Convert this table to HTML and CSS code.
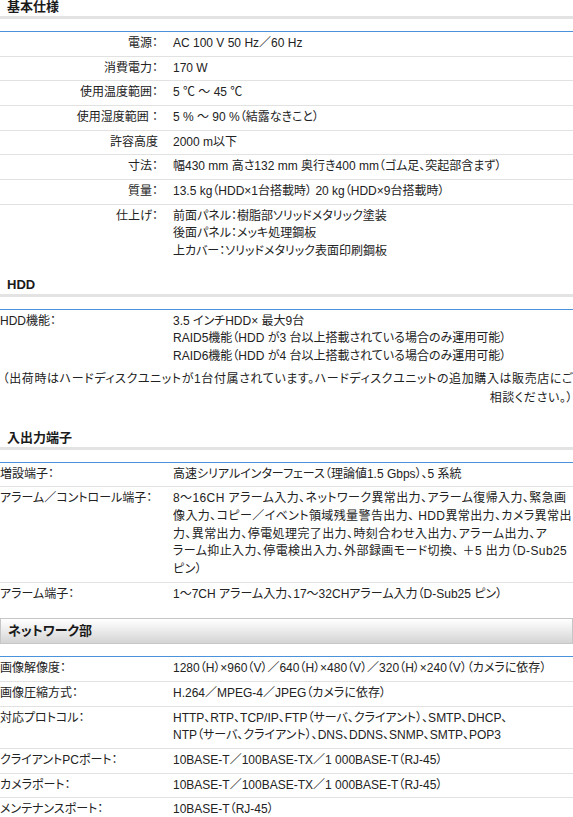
FILE: index.html
```html
<!DOCTYPE html>
<html lang="ja">
<head>
<meta charset="utf-8">
<title>仕様</title>
<link rel="stylesheet" href="styles.css">
</head>
<body>
<div class="spec">
  <h3 class="sec-title sec-title--first">基本仕様</h3>
  <table class="spec-table spec-table--right">
    <tr><th>電源：</th><td>AC 100 V 50 Hz／60 Hz</td></tr>
    <tr><th>消費電力：</th><td>170 W</td></tr>
    <tr><th>使用温度範囲：</th><td>5 ℃ ～ 45 ℃</td></tr>
    <tr><th>使用湿度範囲&nbsp;：</th><td>5 % ～ 90 %（結露なきこと）</td></tr>
    <tr><th>許容高度</th><td>2000 m以下</td></tr>
    <tr><th>寸法：</th><td>幅430 mm 高さ132 mm 奥行き400 mm（ゴム足、突起部含まず）</td></tr>
    <tr><th>質量：</th><td>13.5 kg（HDD×1台搭載時） 20 kg（HDD×9台搭載時）</td></tr>
    <tr class="last"><th>仕上げ：</th><td>前面パネル：樹脂部ソリッドメタリック塗装<br>後面パネル：メッキ処理鋼板<br>上カバー：ソリッドメタリック表面印刷鋼板</td></tr>
  </table>

  <h3 class="sec-title">HDD</h3>
  <table class="spec-table">
    <tr class="last"><th>HDD機能：</th><td>3.5 インチHDD× 最大9台<br>RAID5機能（HDD が3 台以上搭載されている場合のみ運用可能）<br>RAID6機能（HDD が4 台以上搭載されている場合のみ運用可能）</td></tr>
  </table>
  <p class="note">（出荷時はハードディスクユニットが1台付属されています。ハードディスクユニットの追加購入は販売店にご<br>相談ください。）</p>

  <h3 class="sec-title sec-title--io">入出力端子</h3>
  <table class="spec-table">
    <tr><th>増設端子：</th><td>高速シリアルインターフェース（理論値1.5 Gbps）、5 系統</td></tr>
    <tr><th>アラーム／コントロール端子：</th><td class="long">8～16CH アラーム入力、ネットワーク異常出力、アラーム復帰入力、緊急画<br>像入力、コピー／イベント領域残量警告出力、 HDD異常出力、カメラ異常出<br>力、異常出力、停電処理完了出力、時刻合わせ入出力、アラーム出力、ア<br>ラーム抑止入力、停電検出入力、外部録画モード切換、 ＋5 出力（D-Sub25<br>ピン）</td></tr>
    <tr class="last"><th>アラーム端子：</th><td>1～7CH アラーム入力、17～32CHアラーム入力（D-Sub25 ピン）</td></tr>
  </table>

  <h3 class="sec-title sec-title--boxed">ネットワーク部</h3>
  <table class="spec-table">
    <tr><th>画像解像度：</th><td>1280（H）×960（V）／640（H）×480（V）／320（H）×240（V）（カメラに依存）</td></tr>
    <tr><th>画像圧縮方式：</th><td>H.264／MPEG-4／JPEG（カメラに依存）</td></tr>
    <tr><th>対応プロトコル：</th><td>HTTP、RTP、TCP/IP、FTP（サーバ、クライアント）、SMTP、DHCP、<br>NTP（サーバ、クライアント）、DNS、DDNS、SNMP、SMTP、POP3</td></tr>
    <tr><th>クライアントPCポート：</th><td>10BASE-T／100BASE-TX／1 000BASE-T（RJ-45）</td></tr>
    <tr><th>カメラポート：</th><td>10BASE-T／100BASE-TX／1 000BASE-T（RJ-45）</td></tr>
    <tr class="last"><th>メンテナンスポート：</th><td>10BASE-T（RJ-45）</td></tr>
  </table>
</div>
</body>
</html>
```

FILE: styles.css
```css
html, body {
  margin: 0;
  padding: 0;
  background: #fff;
}

body {
  font-family: "Liberation Sans", "Noto Sans CJK JP", sans-serif;
  font-size: 12px;
  color: #222;
  font-feature-settings: "palt";
}

.spec {
  width: 573px;
}

.sec-title {
  margin: 14px 0 12px;
  padding: 0 0 2px 7px;
  font-size: 13px;
  line-height: 14px;
  font-weight: bold;
  color: #1a1a1a;
  border-bottom: 3px solid #e3e3e3;
}

.sec-title--first {
  margin-top: 0;
}

.sec-title--io {
  margin-top: 23px;
}

.sec-title--boxed {
  margin-top: 12px;
  padding: 5px 0 5px 7px;
  border: 1px solid #c6c6c6;
  background: linear-gradient(#ffffff, #f1f1f1 35%, #d4d4d4);
}

.spec-table {
  width: 100%;
  border-collapse: collapse;
  border-top: 1px solid #4a93dc;
}

.spec-table th,
.spec-table td {
  padding: 3px 0;
  line-height: 17.67px;
  vertical-align: top;
  font-weight: normal;
  text-align: left;
  border-bottom: 1px solid #e2e2e2;
}

.spec-table th {
  width: 173px;
  white-space: nowrap;
}

.spec-table td {
  width: 400px;
}

.spec-table td.long {
  white-space: nowrap;
  letter-spacing: 0.4px;
}

.spec-table--right th {
  width: 158px;
  padding-right: 15px;
  text-align: right;
}

.spec-table .last th,
.spec-table .last td {
  border-bottom: none;
}

.note {
  margin: 1px 0 0;
  line-height: 19px;
  text-align: right;
  white-space: nowrap;
  letter-spacing: 0.6px;
}
```
